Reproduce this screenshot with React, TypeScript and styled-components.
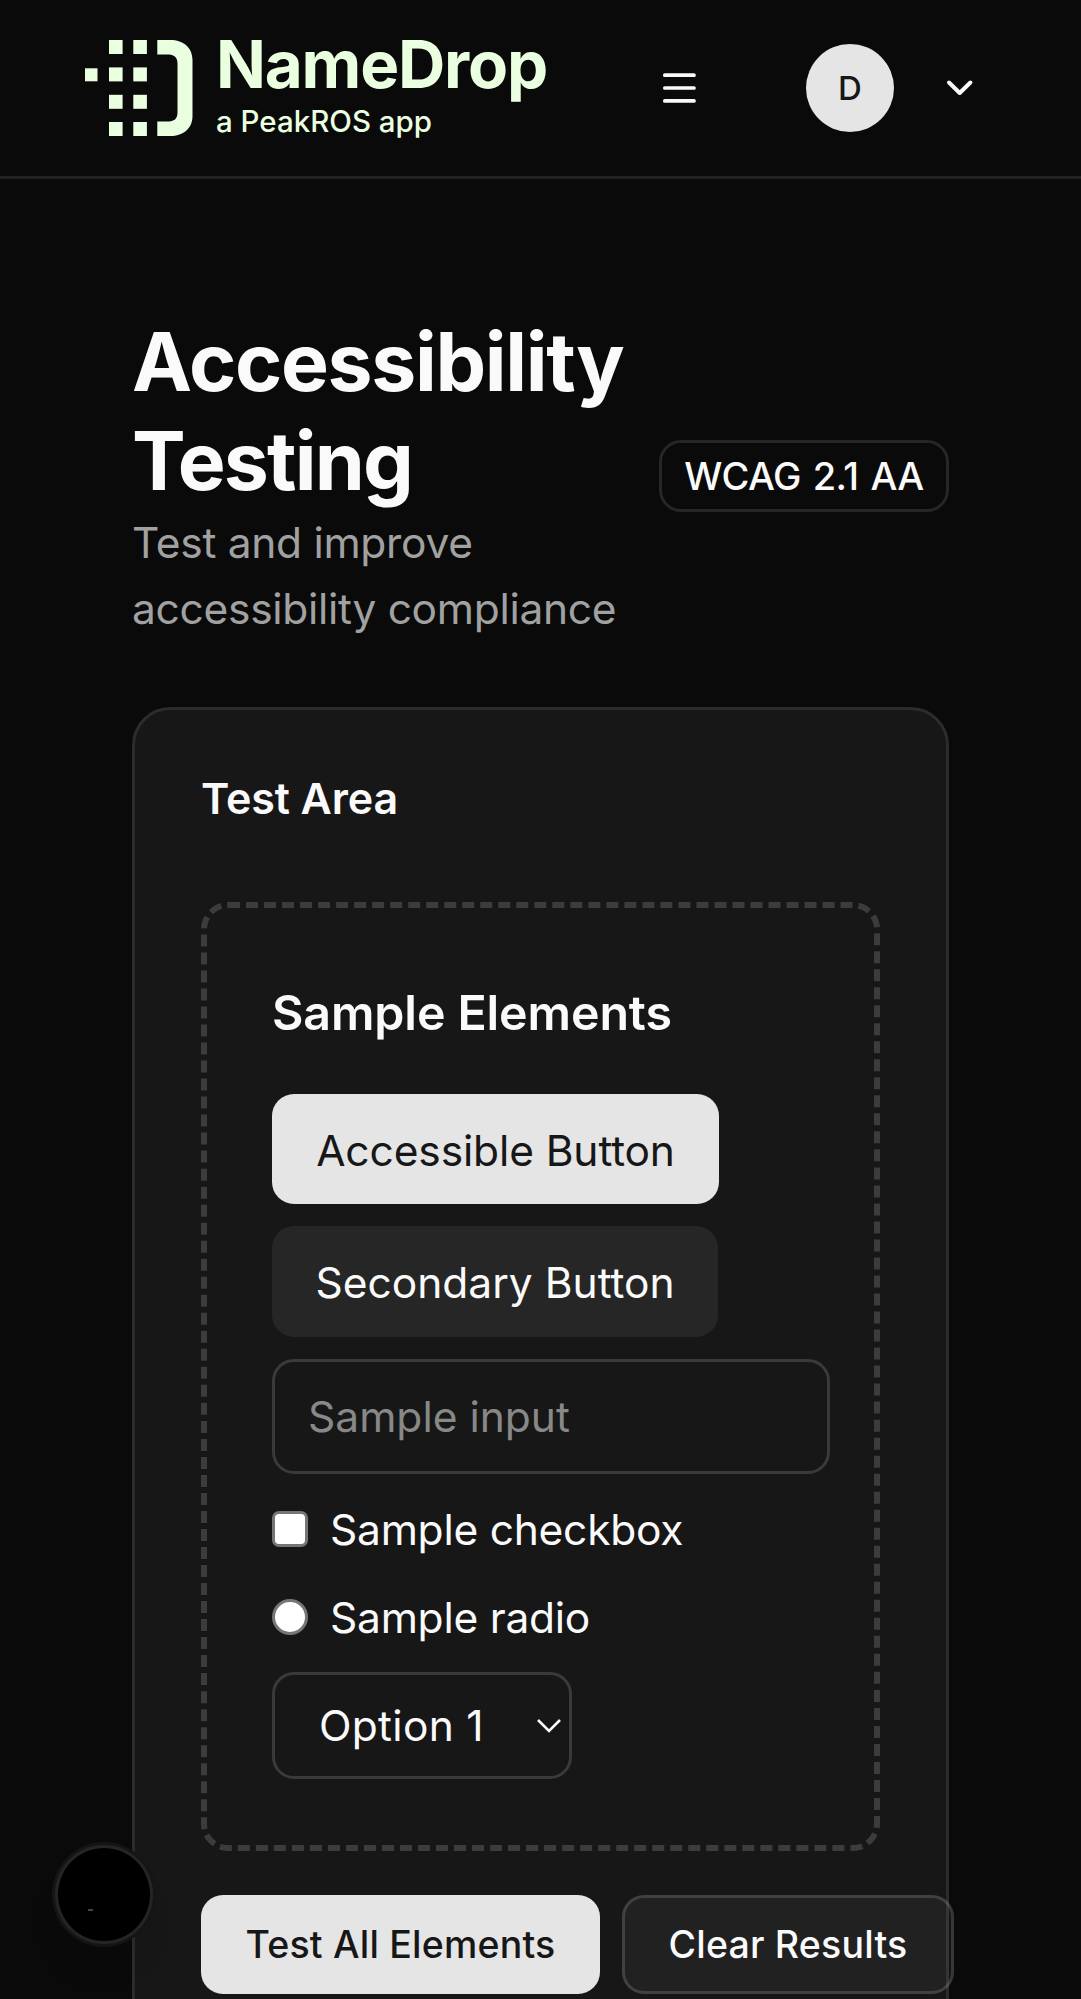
import React from "react";
import styled, { createGlobalStyle, css } from "styled-components";

const GlobalStyle = createGlobalStyle`
  *, *::before, *::after { box-sizing: border-box; }
  html, body { margin: 0; background: #0a0a0a; }
  body {
    font-family: Inter, "Liberation Sans", sans-serif;
    color: #fafafa;
    font-size: 42.5px;
    line-height: 66px;
  }
  button, input { font: inherit; color: inherit; margin: 0; }
  h1, h2, h3, p { margin: 0; }
`;

const Page = styled.div`
  position: relative;
  width: 1081px;
  height: 1999px;
  overflow: hidden;
  background: #0a0a0a;
`;

const Header = styled.header`
  display: flex;
  align-items: center;
  height: 179px;
  padding: 0 105px 0 85px;
  border-bottom: 3px solid #222;
`;

const Brand = styled.a`
  display: flex;
  gap: 23px;
  height: 96px;
  color: #eaffe0;
`;

const BrandText = styled.div`
  display: flex;
  flex-direction: column;
  width: 340px;
  white-space: nowrap;
`;

const BrandName = styled.span`
  font-size: 65.5px;
  font-weight: 750;
  line-height: 66px;
  margin-top: -8px;
  letter-spacing: -1.2px;
`;

const BrandTag = styled.span`
  font-size: 29.5px;
  font-weight: 500;
  line-height: 36px;
  margin-top: 5px;
`;

const IconButton = styled.button`
  display: flex;
  padding: 0;
  border: 0;
  background: none;
`;

const MenuButton = styled(IconButton)`
  margin-left: 104px;
`;

const UserMenu = styled.div`
  display: flex;
  align-items: center;
  gap: 50px;
  margin-left: auto;
`;

const Avatar = styled.div`
  display: flex;
  align-items: center;
  justify-content: center;
  width: 88px;
  height: 88px;
  border-radius: 50%;
  background: #e5e5e5;
  color: #171717;
  font-size: 33px;
  font-weight: 500;
`;

const Main = styled.main`
  padding: 133px 132px 0;
`;

const Intro = styled.section`
  display: flex;
  align-items: center;
  justify-content: space-between;
  margin-bottom: 65px;
`;

const Title = styled.h1`
  font-size: 80.5px;
  font-weight: 700;
  line-height: 99px;
`;

const TitleLine = styled.span<{ $tracking: number }>`
  display: block;
  letter-spacing: ${(p) => p.$tracking}px;
`;

const Subtitle = styled.p`
  color: #a1a1a1;
  white-space: nowrap;
  letter-spacing: -0.3px;
`;

const Badge = styled.span`
  display: flex;
  align-items: center;
  justify-content: center;
  width: 290px;
  height: 72px;
  margin-bottom: 2px;
  border: 3px solid #262626;
  border-radius: 22px;
  font-size: 38px;
  font-weight: 450;
  letter-spacing: -0.6px;
  word-spacing: 2.5px;
  white-space: nowrap;
`;

const Card = styled.section`
  height: 1400px;
  padding: 55px 66px 0 66px;
  border: 3px solid #2c2c2c;
  border-radius: 38.5px;
  background: #171717;
`;

const CardTitle = styled.h2`
  font-size: 43px;
  font-weight: 600;
  line-height: 66px;
  letter-spacing: -0.1px;
  margin-bottom: 71px;
`;

const TestBox = styled.div`
  display: flex;
  flex-direction: column;
  align-items: flex-start;
  gap: 22px;
  height: 949px;
  padding: 66px 42px 0 65px;
  border: 6px dashed #3c3c3c;
  border-radius: 27px;
`;

const SectionTitle = styled.h3`
  font-size: 48.3px;
  font-weight: 600;
  line-height: 77px;
  letter-spacing: -0.1px;
  margin-bottom: 21px;
`;

const SampleButton = styled.button<{ $primary?: boolean }>`
  width: ${(p) => (p.$primary ? 447 : 446)}px;
  height: 110.3px;
  flex-shrink: 0;
  padding: 3px 0 0;
  border: 0;
  border-radius: 22px;
  white-space: nowrap;
  letter-spacing: ${(p) => (p.$primary ? -0.12 : 0)}px;
  background: ${(p) => (p.$primary ? "#e5e5e5" : "#262626")};
  color: ${(p) => (p.$primary ? "#171717" : "#fafafa")};
`;

const fieldFrame = css`
  border: 3px solid #3a3a3a;
  border-radius: 22px;
  background: #171717;
`;

const TextField = styled.input`
  ${fieldFrame}
  width: 558px;
  height: 115px;
  padding: 1px 33px 0;
  outline: none;
  &::placeholder { color: #888; opacity: 1; }
`;

const Choice = styled.label`
  display: flex;
  align-items: center;
  gap: 22px;
  height: 66px;
  padding-top: 3px;
  letter-spacing: -0.25px;
`;

const ChoiceMark = styled.input`
  appearance: none;
  width: 36px;
  height: 36px;
  margin-top: -2px;
  border: 3px solid #767676;
  border-radius: ${(p) => (p.type === "radio" ? "50%" : "7px")};
  background: #fff;
`;

const Select = styled.button`
  ${fieldFrame}
  display: flex;
  align-items: center;
  justify-content: space-between;
  width: 300px;
  height: 107px;
  padding: 2px 7px 0 44px;
  letter-spacing: 0.3px;
`;

const Actions = styled.div`
  display: flex;
  gap: 22px;
  margin-top: 44px;
`;

const ActionButton = styled.button<{ $outline?: boolean }>`
  flex: none;
  width: ${(p) => (p.$outline ? 332 : 399)}px;
  height: 99px;
  padding: 0;
  border: ${(p) => (p.$outline ? "3px solid rgba(255,255,255,.15)" : "0")};
  border-radius: 22px;
  background: ${(p) => (p.$outline ? "rgba(255,255,255,.045)" : "#e5e5e5")};
  color: ${(p) => (p.$outline ? "#fafafa" : "#171717")};
  font-size: 37.5px;
  font-weight: 500;
  letter-spacing: 0.2px;
  white-space: nowrap;
`;

const FloatingButton = styled.button`
  position: absolute;
  left: 55px;
  top: 1845px;
  width: 98px;
  height: 99px;
  padding: 0;
  border: 3px solid #252525;
  border-radius: 50%;
  background: #000;
  box-shadow: 0 0 0 3px #151515, 0 28px 42px -8px rgba(0, 0, 0, .06);
`;

const Cursor = styled.span`
  position: absolute;
  left: 30px;
  top: 61px;
  width: 5px;
  height: 2px;
  background: #444;
`;

const LogoMark = () => (
  <svg width="108" height="96" viewBox="0 0 108 96" fill="#eaffe0">
    <rect x="0" y="28.3" width="12.5" height="13" />
    {[0, 27.4, 54.8, 82].map((y) => (
      <React.Fragment key={y}>
        <rect x="24" y={y} width="13.6" height="14" />
        <rect x="48.3" y={y} width="13.6" height="14" />
      </React.Fragment>
    ))}
    <path d="M72.3 0H85C99 0 107.5 8 107.5 20V76C107.5 88 99 96 85 96H72.3V81.5H82C89.500 81.500 92.500 79 92.500 72V24C92.500 17 89.500 14.500 82 14.500H72.300Z" />
  </svg>
);

export default function App() {
  return (
    <Page>
      <GlobalStyle />
      <Header>
        <Brand>
          <LogoMark />
          <BrandText>
            <BrandName>NameDrop</BrandName>
            <BrandTag>a PeakROS app</BrandTag>
          </BrandText>
        </Brand>
        <MenuButton aria-label="Menu">
          <svg width="36" height="36" viewBox="0 0 36 36" stroke="#fafafa" strokeWidth="3.7" strokeLinecap="round">
            <path d="M4.800 5.200H34M4.800 18H34M4.800 30.900H34" />
          </svg>
        </MenuButton>
        <UserMenu>
          <Avatar>D</Avatar>
          <svg width="32" height="32" viewBox="0 0 32 32" fill="none" stroke="#fafafa" strokeWidth="4" strokeLinecap="round" strokeLinejoin="round">
            <path d="M5 10.500L15.700 21L26.400 10.500" />
          </svg>
        </UserMenu>
      </Header>
      <Main>
        <Intro>
          <div>
            <Title>
              <TitleLine $tracking={-1.35}>Accessibility</TitleLine>
              <TitleLine $tracking={-1.8}>Testing</TitleLine>
            </Title>
            <Subtitle>Test and improve<br />accessibility compliance</Subtitle>
          </div>
          <Badge>WCAG 2.1 AA</Badge>
        </Intro>
        <Card>
          <CardTitle>Test Area</CardTitle>
          <TestBox>
            <SectionTitle>Sample Elements</SectionTitle>
            <SampleButton $primary>Accessible Button</SampleButton>
            <SampleButton>Secondary Button</SampleButton>
            <TextField placeholder="Sample input" />
            <Choice><ChoiceMark type="checkbox" />Sample checkbox</Choice>
            <Choice><ChoiceMark type="radio" />Sample radio</Choice>
            <Select>
              Option 1
              <svg width="26" height="26" viewBox="0 0 26 26" fill="none" stroke="#fafafa" strokeWidth="2.600">
                <path d="M2 7L13 18L24 7" />
              </svg>
            </Select>
          </TestBox>
          <Actions>
            <ActionButton>Test All Elements</ActionButton>
            <ActionButton $outline>Clear Results</ActionButton>
          </Actions>
        </Card>
      </Main>
      <FloatingButton aria-label="Open console"><Cursor /></FloatingButton>
    </Page>
  );
}
